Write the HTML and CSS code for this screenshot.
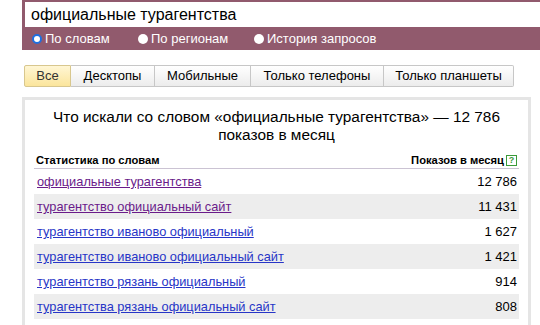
FILE: index.html
```html
<!DOCTYPE html>
<html lang="ru">
<head>
<meta charset="utf-8">
<link rel="stylesheet" href="styles.css">
</head>
<body>
<div class="search">
  <div class="input">официальные турагентства</div>
  <div class="radios">
    <span class="radio"><span class="dot on"></span>По словам</span>
    <span class="radio"><span class="dot"></span>По регионам</span>
    <span class="radio"><span class="dot"></span>История запросов</span>
  </div>
</div>
<div class="tabs">
  <span class="tab active">Все</span><span class="tab">Десктопы</span><span class="tab">Мобильные</span><span class="tab">Только телефоны</span><span class="tab">Только планшеты</span>
</div>
<div class="panel">
  <div class="title">Что искали со словом «официальные турагентства» — 12 786 показов в месяц</div>
  <div class="head">
    <span>Статистика по словам</span>
    <span class="hright">Показов в месяц<span class="q">?</span></span>
  </div>
  <div class="row"><a class="visited" href="#">официальные турагентства</a><span>12 786</span></div>
  <div class="row alt"><a class="visited" href="#">турагентство официальный сайт</a><span>11 431</span></div>
  <div class="row"><a href="#">турагентство иваново официальный</a><span>1 627</span></div>
  <div class="row alt"><a href="#">турагентство иваново официальный сайт</a><span>1 421</span></div>
  <div class="row"><a href="#">турагентство рязань официальный</a><span>914</span></div>
  <div class="row alt"><a href="#">турагентства рязань официальный сайт</a><span>808</span></div>
</div>
</body>
</html>
```
FILE: styles.css
```css
html, body { margin: 0; padding: 0; background: #fff; }
body { font-family: Arial, "Liberation Sans", sans-serif; width: 540px; overflow: hidden; }
.search { margin-left: 22px; background: #915a6d; height: 50px; padding-top: 2px; box-sizing: border-box; }
.input { margin-left: 3px; background: #fff; height: 25px; line-height: 25px; font-size: 16px; padding-left: 6px; color: #000; }
.radios { display: flex; height: 23px; align-items: center; padding-left: 10px; color: #fff; font-size: 13px; }
.radio { display: flex; align-items: center; }
.radio:nth-child(1) { width: 106px; }
.radio:nth-child(2) { width: 116px; }
.dot { width: 10px; height: 10px; border-radius: 50%; background: #fff; margin-right: 3px; box-sizing: border-box; }
.dot.on { border: 2px solid #1e6fe0; background: #fff; }
.tabs { display: flex; margin: 15px 0 0 24px; height: 22px; }
.tab { font-size: 13px; color: #000; border: 1px solid #c7c7c7; border-left: none; background: linear-gradient(#fff, #ececec); height: 22px; box-sizing: border-box; line-height: 20px; text-align: center; }
.tab:nth-child(1) { width: 47px; border-left: 1px solid #c7c7c7; border-radius: 2px 0 0 2px; background: linear-gradient(#fff6d4, #fbe59c); border-color: #d8c78e; color: #333; }
.tab:nth-child(2) { width: 84px; }
.tab:nth-child(3) { width: 96px; }
.tab:nth-child(4) { width: 133px; }
.tab:nth-child(5) { width: 130px; border-radius: 0 2px 2px 0; }
.panel { margin: 10px 9px 0 22px; border: 3px solid #e5e5e5; border-bottom: none; padding: 8px 9px 10px 9px; }
.title { text-align: center; font-size: 15.4px; line-height: 18px; color: #000; padding: 0 12px; }
.head { display: flex; justify-content: space-between; font-size: 11.2px; font-weight: bold; color: #000; margin-top: 9px; padding: 0 3px 1px 2px; border-bottom: 1px solid #cbc3d3; height: 14px; line-height: 14px; }
.hright { display: flex; align-items: center; margin-right: -1px; }
.q { display: inline-block; width: 9px; height: 9px; border: 1px solid #3a9a3a; color: #3a9a3a; font-size: 9px; line-height: 9px; text-align: center; margin-left: 2px; font-weight: bold; }
.row { display: flex; justify-content: space-between; align-items: center; height: 25px; font-size: 13px; padding: 0 2px 0 3px; color: #000; }
.row.alt { background: #ededed; }
.row a { color: #2735c7; text-decoration: underline; font-size: 12.8px; }
.row a.visited { color: #6a1b8a; }
```
